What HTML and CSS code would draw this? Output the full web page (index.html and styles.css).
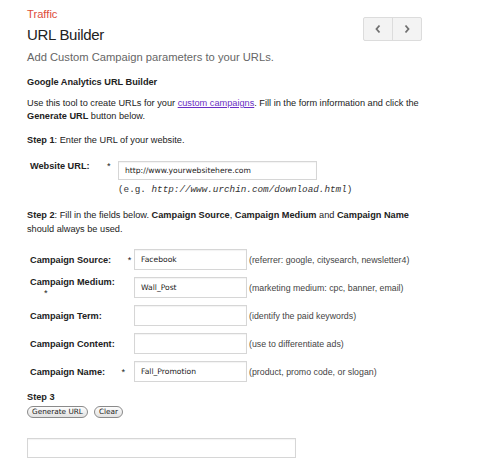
FILE: index.html
```html
<!DOCTYPE html>
<html>
<head>
<meta charset="utf-8">
<link rel="stylesheet" href="styles.css">
</head>
<body>
<div class="page">
  <div class="header">
    <div class="titles">
      <div class="crumb">Traffic</div>
      <h1 class="title">URL Builder</h1>
      <div class="subtitle">Add Custom Campaign parameters to your URLs.</div>
    </div>
    <div class="pager">
      <span class="pbtn"><svg width="8" height="10" viewBox="0 0 8 10"><path d="M5.5 1.5 L2.5 5 L5.5 8.5" fill="none" stroke="#707070" stroke-width="1.8"/></svg></span>
      <span class="pbtn"><svg width="8" height="10" viewBox="0 0 8 10"><path d="M2.5 1.5 L5.5 5 L2.5 8.5" fill="none" stroke="#707070" stroke-width="1.8"/></svg></span>
    </div>
  </div>

  <h2 class="section">Google Analytics URL Builder</h2>
  <p class="intro">Use this tool to create URLs for your <a href="#" class="link">custom campaigns</a>. Fill in the form information and click the <b>Generate URL</b> button below.</p>

  <p class="step"><b>Step 1</b>: Enter the URL of your website.</p>

  <div class="urlrow">
    <div class="urllabel">Website URL:</div>
    <div class="star1">*</div>
    <div class="urlfield">
      <div class="input wide">http://www.yourwebsitehere.com</div>
      <div class="example">(e.g. <i>http://www.urchin.com/download.html</i>)</div>
    </div>
  </div>

  <p class="step two"><b>Step 2</b>: Fill in the fields below. <b>Campaign Source</b>, <b>Campaign Medium</b> and <b>Campaign Name</b> should always be used.</p>

  <div class="fields">
    <div class="flabel">Campaign Source: <span class="star">*</span></div>
    <div class="input">Facebook</div>
    <div class="help">(referrer: google, citysearch, newsletter4)</div>

    <div class="flabel top">Campaign Medium:<span class="star block">*</span></div>
    <div class="input">Wall_Post</div>
    <div class="help">(marketing medium: cpc, banner, email)</div>

    <div class="flabel">Campaign Term:</div>
    <div class="input"></div>
    <div class="help">(identify the paid keywords)</div>

    <div class="flabel">Campaign Content:</div>
    <div class="input"></div>
    <div class="help">(use to differentiate ads)</div>

    <div class="flabel">Campaign Name: <span class="star">*</span></div>
    <div class="input">Fall_Promotion</div>
    <div class="help">(product, promo code, or slogan)</div>
  </div>

  <div class="step3">Step 3</div>
  <div class="buttons">
    <span class="btn">Generate URL</span>
    <span class="btn">Clear</span>
  </div>

  <div class="input result"></div>
</div>
</body>
</html>
```

FILE: styles.css
```css
html, body {
  margin: 0;
  padding: 0;
  background: #fff;
}
.page {
  width: 395px;
  padding: 7px 0 0 27px;
  font-family: "Liberation Sans", Arial, sans-serif;
  font-size: 9.2px;
  color: #222;
}
.header {
  display: flex;
  justify-content: space-between;
  align-items: flex-start;
}
.crumb {
  color: #dd4b39;
  font-size: 11.2px;
  line-height: 14px;
}
.title {
  margin: 4px 0 0 0;
  font-size: 15px;
  letter-spacing: -0.3px;
  font-weight: normal;
  line-height: 20px;
  color: #222;
}
.subtitle {
  margin-top: 5px;
  font-size: 11.2px;
  line-height: 14px;
  color: #666;
}
.pager {
  display: flex;
  margin-top: 10px;
  border: 1px solid #dcdcdc;
  border-radius: 2px;
  background: #f3f3f3;
}
.pbtn {
  width: 28px;
  height: 22px;
  display: flex;
  align-items: center;
  justify-content: center;
}
.pbtn + .pbtn {
  border-left: 1px solid #dcdcdc;
}
.section {
  margin: 12px 0 0 0;
  font-size: 9.2px;
  line-height: 12px;
  font-weight: bold;
}
.intro {
  margin: 9px 0 0 0;
  line-height: 13px;
}
.link {
  color: #6a2fc4;
  text-decoration: underline;
}
.step {
  margin: 11px 0 0 0;
  line-height: 13px;
}
.urlrow {
  display: flex;
  margin-top: 14px;
  padding-left: 3px;
}
.urllabel {
  width: 77px;
  font-weight: bold;
  line-height: 11px;
}
.star1 {
  width: 11px;
  line-height: 11px;
}
.input {
  box-sizing: border-box;
  height: 21px;
  border: 1px solid #d6d6d6;
  box-shadow: inset 0 1px 1px rgba(0,0,0,0.05);
  font-family: "DejaVu Sans", sans-serif;
  font-size: 7.6px;
  line-height: 19px;
  padding-left: 6px;
  color: #222;
  background: #fff;
}
.input.wide {
  width: 199px;
  height: 19px;
  line-height: 17px;
}
.example {
  margin-top: 4px;
  font-family: "Liberation Mono", "Courier New", monospace;
  font-size: 9.3px;
  line-height: 12px;
  color: #333;
}
.step.two {
  margin-top: 12px;
  line-height: 14px;
}
.fields {
  display: grid;
  grid-template-columns: 104px 113px auto;
  grid-auto-rows: 21px;
  row-gap: 7px;
  align-items: center;
  margin-top: 13px;
  padding-left: 3px;
}
.flabel {
  font-weight: bold;
  white-space: nowrap;
}
.flabel.top {
  align-self: start;
  line-height: 11px;
}
.star {
  font-weight: normal;
  display: inline-block;
  margin-left: 14px;
}
.star.block {
  display: block;
  margin-left: 14px;
}
.help {
  padding-left: 2px;
  font-size: 8.8px;
  color: #444;
  white-space: nowrap;
}
.step3 {
  margin-top: 9px;
  font-weight: bold;
  line-height: 12px;
}
.buttons {
  display: flex;
  gap: 6px;
  margin-top: 3px;
}
.btn {
  box-sizing: border-box;
  height: 12px;
  padding: 0 4px;
  border: 1px solid #8a8a8a;
  border-radius: 6px;
  background: linear-gradient(#fdfdfd, #e2e2e2);
  font-family: "DejaVu Sans", sans-serif;
  font-size: 7.3px;
  line-height: 10px;
  color: #222;
}
.result {
  width: 269px;
  height: 20px;
  margin-top: 20px;
}
```
